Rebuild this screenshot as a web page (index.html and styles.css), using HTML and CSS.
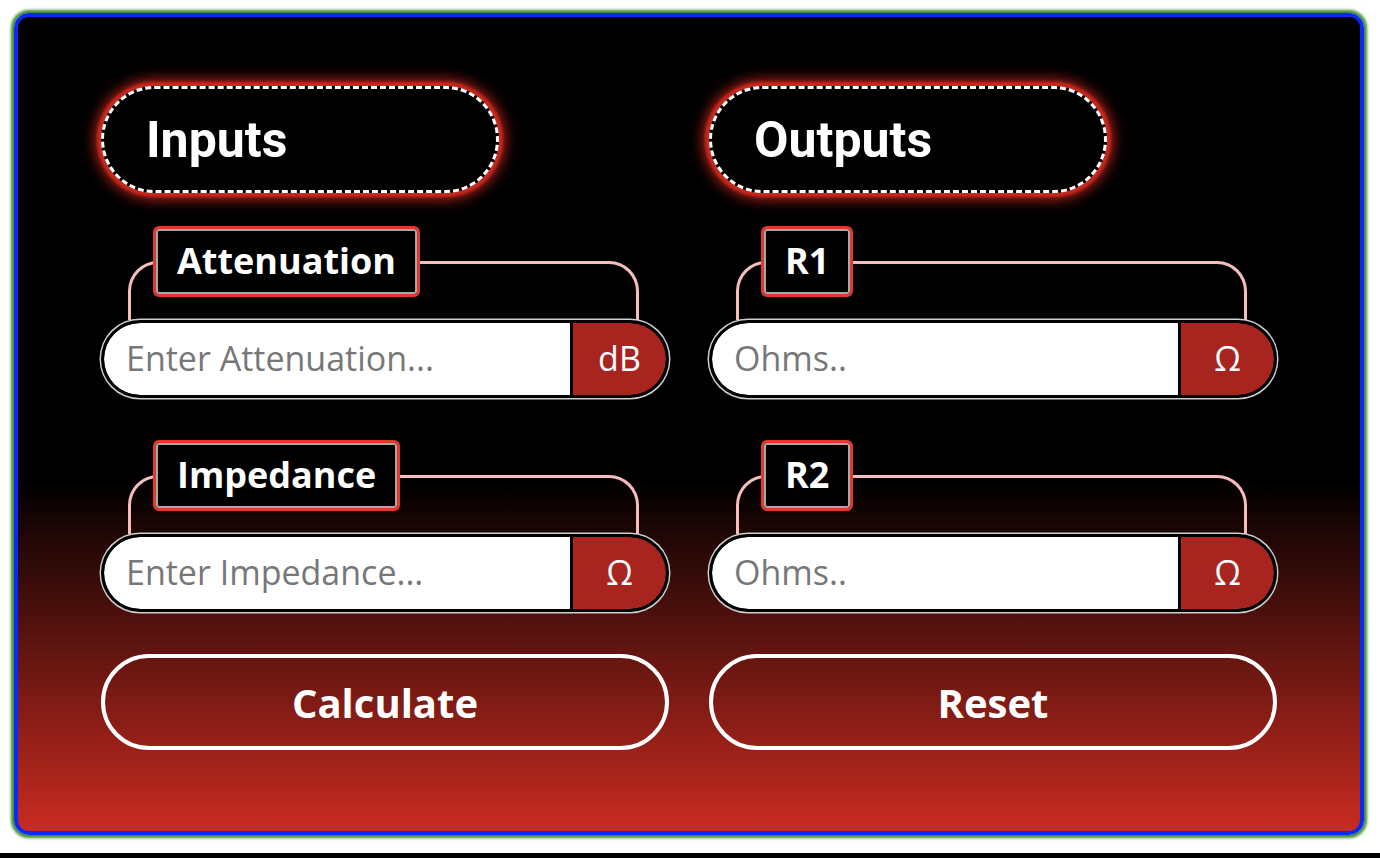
FILE: index.html
```html
<!DOCTYPE html>
<html lang="en">
<head>
<meta charset="utf-8">
<title>Attenuator Calculator</title>
<link rel="stylesheet" href="styles.css">
</head>
<body>
<main class="calc">
  <section class="col">
    <h2 class="pill">Inputs</h2>
    <div class="field">
      <div class="bracket"><label class="tag" for="att">Attenuation</label></div>
      <div class="box">
        <input id="att" class="entry" type="text" placeholder="Enter Attenuation...">
        <span class="unit">dB</span>
      </div>
    </div>
    <div class="field">
      <div class="bracket"><label class="tag" for="imp">Impedance</label></div>
      <div class="box">
        <input id="imp" class="entry" type="text" placeholder="Enter Impedance...">
        <span class="unit">&#937;</span>
      </div>
    </div>
    <button class="action" type="button">Calculate</button>
  </section>
  <section class="col">
    <h2 class="pill">Outputs</h2>
    <div class="field">
      <div class="bracket"><label class="tag" for="r1">R1</label></div>
      <div class="box">
        <input id="r1" class="entry" type="text" placeholder="Ohms.." readonly>
        <span class="unit">&#937;</span>
      </div>
    </div>
    <div class="field">
      <div class="bracket"><label class="tag" for="r2">R2</label></div>
      <div class="box">
        <input id="r2" class="entry" type="text" placeholder="Ohms.." readonly>
        <span class="unit">&#937;</span>
      </div>
    </div>
    <button class="action" type="reset">Reset</button>
  </section>
</main>
<footer class="bar"></footer>
</body>
</html>
```
FILE: styles.css
```css
html, body {
  margin: 0;
  padding: 0;
  background: #fff;
  font-family: "Open Sans", "Liberation Sans", sans-serif;
}

body {
  padding-top: 13px;
}

/* main panel */
.calc {
  box-sizing: border-box;
  width: 1350px;
  height: 822px;
  margin: 0 16px 0 14px;
  border: 4px solid #0a2af5;
  border-radius: 15px;
  box-shadow: 0 0 3px 3px #3f8a2e;
  background: linear-gradient(to bottom, #000 0%, #000 57%, #c92b21 100%);
  display: grid;
  grid-template-columns: 568px 568px;
  column-gap: 40px;
  padding: 69px 83px 0 83px;
}

.col {
  display: flex;
  flex-direction: column;
}

/* section headers */
.pill {
  box-sizing: border-box;
  width: 398px;
  height: 107px;
  margin: 0;
  padding-left: 42px;
  display: flex;
  align-items: center;
  border: 3px dashed #fff;
  border-radius: 54px;
  background: #000;
  box-shadow: 0 0 3px 4px #c8291f, 0 0 14px 6px #b8241b;
  color: #fff;
  font-family: Roboto, "Liberation Sans", sans-serif;
  font-weight: 700;
  font-size: 50px;
}

/* labelled field */
.field {
  margin-top: 68px;
}

.field + .field {
  margin-top: 77px;
}

.bracket {
  box-sizing: border-box;
  height: 59px;
  margin: 0 30px 0 27px;
  border: 3px solid #f6bdbd;
  border-bottom: none;
  border-radius: 30px 30px 0 0;
}

.tag {
  box-sizing: border-box;
  display: inline-flex;
  align-items: center;
  height: 71px;
  margin: -38px 0 0 22px;
  padding: 0 21px 2px;
  border: 3px solid #e3392b;
  border-radius: 6px;
  background: #000;
  box-shadow: inset 0 0 0 2px #a8a8a8;
  color: #fff;
  font-weight: 700;
  font-size: 36px;
  vertical-align: top;
}

.box {
  box-sizing: border-box;
  display: flex;
  gap: 3px;
  height: 78px;
  border: 3px solid #000;
  border-radius: 40px;
  background: #000;
  box-shadow: 0 0 0 1.5px #cfcfcf;
  overflow: hidden;
}

.entry {
  flex: 1;
  min-width: 0;
  margin: 0;
  padding: 0 0 2px 22px;
  border: none;
  border-radius: 36px 0 0 36px;
  background: #fff;
  color: #222;
  font-family: "Open Sans", "Liberation Sans", sans-serif;
  font-size: 34px;
  outline: none;
}

.entry::placeholder {
  color: #777;
}

.unit {
  width: 93px;
  display: flex;
  align-items: center;
  justify-content: center;
  padding-bottom: 2px;
  border-radius: 0 36px 36px 0;
  background: #a8241e;
  color: #fff;
  font-size: 34px;
}

/* buttons */
.action {
  box-sizing: border-box;
  height: 96px;
  margin-top: 42px;
  border: 4px solid #fff;
  border-radius: 48px;
  background: transparent;
  color: #fff;
  font-family: "Open Sans", "Liberation Sans", sans-serif;
  font-weight: 700;
  font-size: 40px;
  cursor: pointer;
}

.bar {
  height: 10px;
  margin-top: 18px;
  background: #000;
}
```
